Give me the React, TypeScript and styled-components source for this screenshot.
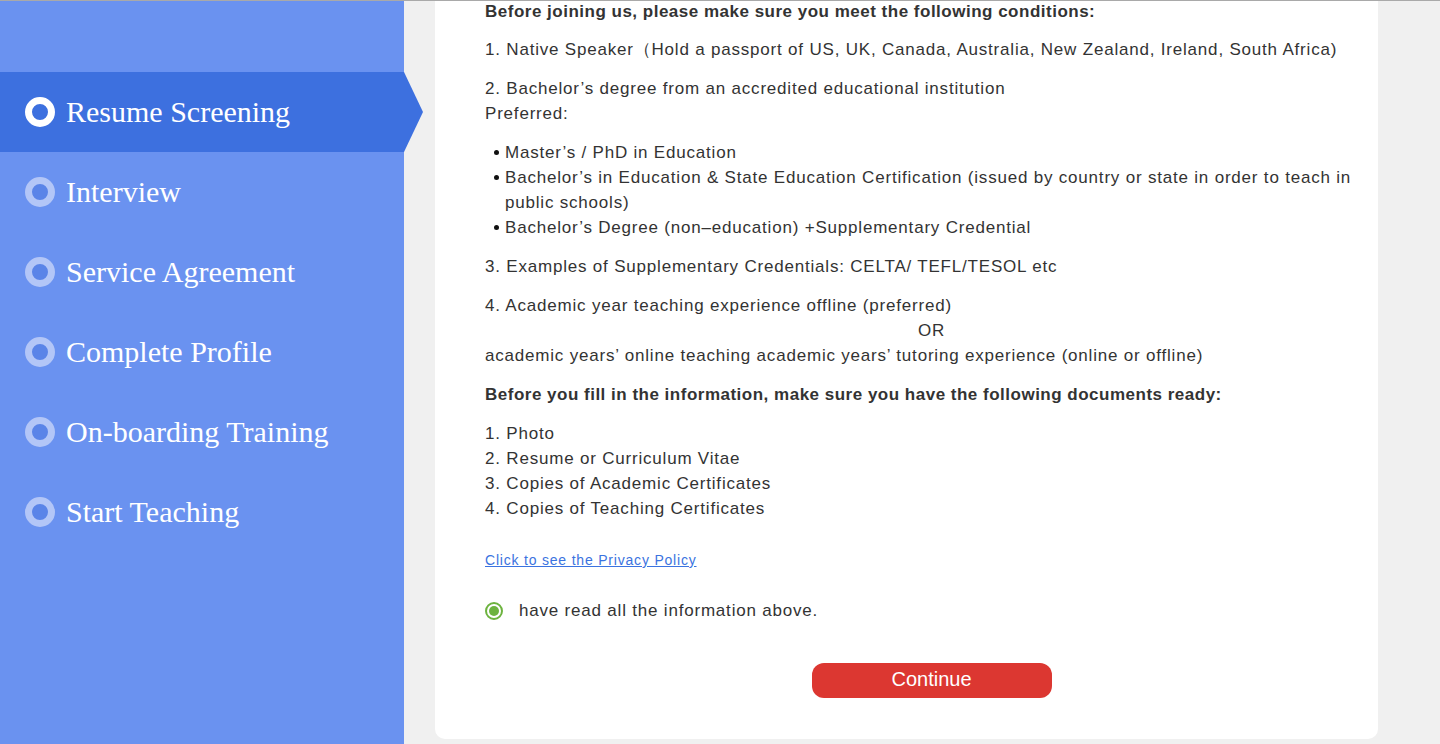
import React from "react";
import styled, { createGlobalStyle } from "styled-components";

const GlobalStyle = createGlobalStyle`
  html, body { margin: 0; padding: 0; background: #f0f0f0; }
  body { font-family: "Liberation Sans", Arial, sans-serif; }
  * { box-sizing: border-box; }
`;

const Shell = styled.div`
  display: flex;
  height: 744px;
  border-top: 1px solid #a9a9a9;
  overflow: hidden;
`;

const Sidebar = styled.nav`
  width: 404px;
  flex: none;
  background: #6a92f0;
  padding-top: 71px;
  display: flex;
  flex-direction: column;
  position: relative;
  z-index: 1;
`;

const StepItem = styled.div<{ $active?: boolean }>`
  height: 80px;
  display: flex;
  align-items: center;
  gap: 11px;
  padding-left: 25px;
  width: ${(p) => (p.$active ? "calc(100% + 19px)" : "100%")};
  background: ${(p) => (p.$active ? "#3d70df" : "transparent")};
  clip-path: ${(p) =>
    p.$active ? "polygon(0 0, calc(100% - 19px) 0, 100% 50%, calc(100% - 19px) 100%, 0 100%)" : "none"};
`;

const StepDot = styled.span<{ $active?: boolean }>`
  width: 30px;
  height: 30px;
  border-radius: 50%;
  flex: none;
  background: ${(p) => (p.$active ? "#3d70df" : "#5a84e8")};
  border: 7px solid ${(p) => (p.$active ? "#ffffff" : "#b3c6f7")};
`;

const StepLabel = styled.span`
  font-family: "Liberation Serif", "Times New Roman", serif;
  font-size: 30px;
  color: #ffffff;
  line-height: 1;
`;

const Main = styled.main`
  flex: 1;
  padding: 0 62px 6px 31px;
  display: flex;
  flex-direction: column;
`;

const Card = styled.section`
  flex: 1;
  background: #ffffff;
  border-radius: 0 0 10px 10px;
  padding: 0 0 41px 50px;
  color: #333333;
  font-size: 17px;
  letter-spacing: 0.8px;
`;

const Heading = styled.p<{ $tight?: boolean }>`
  margin: ${(p) => (p.$tight ? "0" : "14px 0 0")};
  font-weight: bold;
  line-height: ${(p) => (p.$tight ? "22px" : "25px")};
  letter-spacing: 0.5px;
`;

const Para = styled.p`
  margin: 14px 0 0;
  line-height: 25px;
`;

const Centered = styled.span`
  display: block;
  text-align: center;
`;

const BulletList = styled.ul`
  list-style: none;
  margin: 14px 0 0;
  padding: 0 8px 0 0;
  line-height: 25px;
`;

const Bullet = styled.li`
  position: relative;
  padding-left: 20px;
  &::before {
    content: "";
    position: absolute;
    left: 9px;
    top: 10px;
    width: 5px;
    height: 5px;
    border-radius: 50%;
    background: #111;
  }
`;

const PolicyLink = styled.a`
  display: inline-block;
  margin-top: 29px;
  font-size: 14px;
  line-height: 20px;
  letter-spacing: 0.8px;
  color: #3b73e0;
  text-decoration: underline;
`;

const ConfirmRow = styled.label`
  display: flex;
  align-items: center;
  gap: 16px;
  margin-top: 31px;
  height: 20px;
  line-height: 20px;
`;

const Radio = styled.span`
  width: 18px;
  height: 18px;
  border-radius: 50%;
  border: 2px solid #6db33f;
  display: flex;
  align-items: center;
  justify-content: center;
  flex: none;
  &::after {
    content: "";
    width: 10px;
    height: 10px;
    border-radius: 50%;
    background: #6db33f;
  }
`;

const ButtonRow = styled.div`
  display: flex;
  justify-content: center;
  margin-top: 42px;
`;

const ContinueButton = styled.button`
  width: 240px;
  height: 35px;
  border: none;
  border-radius: 12px;
  background: #dc3731;
  color: #ffffff;
  font-family: "Liberation Sans", Arial, sans-serif;
  font-size: 20px;
  padding: 0 0 2px;
  cursor: pointer;
`;

const steps = [
  "Resume Screening",
  "Interview",
  "Service Agreement",
  "Complete Profile",
  "On-boarding Training",
  "Start Teaching",
];

export default function App() {
  return (
    <>
      <GlobalStyle />
      <Shell>
        <Sidebar>
          {steps.map((s, i) => (
            <StepItem key={s} $active={i === 0}>
              <StepDot $active={i === 0} />
              <StepLabel>{s}</StepLabel>
            </StepItem>
          ))}
        </Sidebar>
        <Main>
          <Card>
            <Heading $tight>Before joining us, please make sure you meet the following conditions:</Heading>
            <Para>1. Native Speaker（Hold a passport of US, UK, Canada, Australia, New Zealand, Ireland, South Africa)</Para>
            <Para>
              2. Bachelor’s degree from an accredited educational institution
              <br />
              Preferred:
            </Para>
            <BulletList>
              <Bullet>Master’s / PhD in Education</Bullet>
              <Bullet>
                Bachelor’s in Education &amp; State Education Certification (issued by country or state in order to teach in public schools)
              </Bullet>
              <Bullet>Bachelor’s Degree (non–education) +Supplementary Credential</Bullet>
            </BulletList>
            <Para>3. Examples of Supplementary Credentials: CELTA/ TEFL/TESOL etc</Para>
            <Para>
              4. Academic year teaching experience offline (preferred)
              <Centered>OR</Centered>
              academic years’ online teaching academic years’ tutoring experience (online or offline)
            </Para>
            <Heading>Before you fill in the information, make sure you have the following documents ready:</Heading>
            <Para>
              1. Photo
              <br />
              2. Resume or Curriculum Vitae
              <br />
              3. Copies of Academic Certificates
              <br />
              4. Copies of Teaching Certificates
            </Para>
            <PolicyLink href="#">Click to see the Privacy Policy</PolicyLink>
            <ConfirmRow>
              <Radio />
              have read all the information above.
            </ConfirmRow>
            <ButtonRow>
              <ContinueButton>Continue</ContinueButton>
            </ButtonRow>
          </Card>
        </Main>
      </Shell>
    </>
  );
}
